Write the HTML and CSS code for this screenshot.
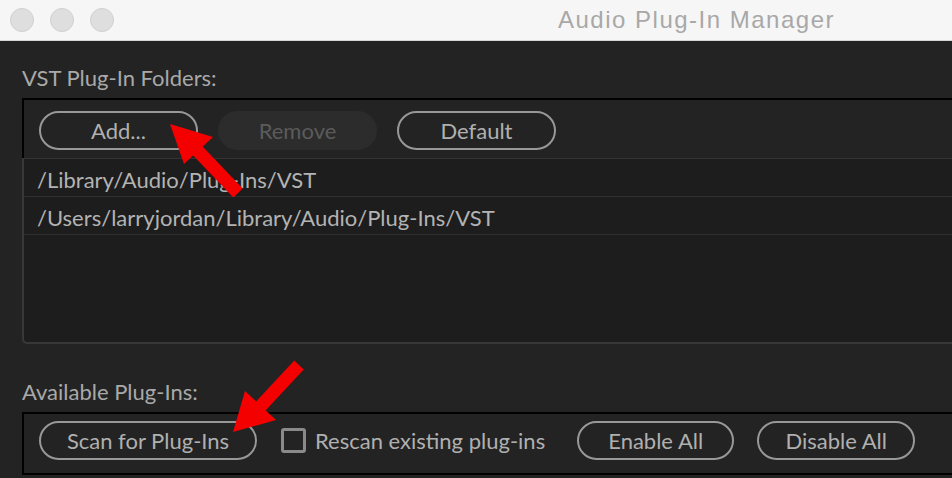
FILE: index.html
```html
<!DOCTYPE html>
<html>
<head>
<meta charset="utf-8">
<title>Audio Plug-In Manager</title>
<link rel="stylesheet" href="styles.css">
</head>
<body>
<div class="window">
  <header class="titlebar">
    <div class="lights">
      <span class="light"></span>
      <span class="light"></span>
      <span class="light"></span>
    </div>
    <div class="title">Audio Plug-In Manager</div>
  </header>
  <main class="content">
    <div class="label label-vst">VST Plug-In Folders:</div>
    <section class="vst">
      <div class="toolbar">
        <button class="btn">Add...</button>
        <button class="btn btn-disabled">Remove</button>
        <button class="btn">Default</button>
      </div>
      <ul class="list">
        <li class="row">/Library/Audio/Plug-Ins/VST</li>
        <li class="row">/Users/larryjordan/Library/Audio/Plug-Ins/VST</li>
      </ul>
    </section>
    <div class="label label-avail">Available Plug-Ins:</div>
    <section class="avail">
      <button class="btn btn-scan">Scan for Plug-Ins</button>
      <label class="check"><span class="box"></span><span class="check-text">Rescan existing plug-ins</span></label>
      <button class="btn btn-enable">Enable All</button>
      <button class="btn btn-disable">Disable All</button>
    </section>
  </main>
  <svg class="arrows" width="952" height="478" viewBox="0 0 952 478">
    <line x1="238" y1="193" x2="195" y2="148" stroke="#f40000" stroke-width="13"/>
    <polygon points="170,124 184,164 213,137" fill="#f40000"/>
    <line x1="299" y1="365" x2="258" y2="409" stroke="#f40000" stroke-width="13"/>
    <polygon points="233,432 245,391 276,420" fill="#f40000"/>
  </svg>
</div>
</body>
</html>
```
FILE: styles.css
```css
* { box-sizing: border-box; }
html, body {
  margin: 0;
  padding: 0;
  background: #232323;
  overflow: hidden;
}
.window {
  position: relative;
  width: 952px;
  height: 478px;
  background: #232323;
  font-family: Lato, "Noto Sans", sans-serif;
  overflow: hidden;
}
.titlebar {
  display: flex;
  align-items: center;
  height: 41px;
  background: #f6f6f6;
  border-bottom: 1px solid #d6d6d6;
  padding-left: 10px;
}
.lights {
  display: flex;
  gap: 16px;
}
.light {
  width: 24px;
  height: 24px;
  border-radius: 50%;
  background: #dedede;
  border: 1px solid #d0d0d0;
}
.title {
  margin-left: 444px;
  font-family: "Liberation Sans", Arial, sans-serif;
  font-size: 24px;
  letter-spacing: 1.5px;
  color: #a8a8a8;
  line-height: 40px;
  padding-bottom: 1px;
}
.content {
  padding-left: 22px;
}
.label {
  font-size: 22px;
  line-height: 25px;
  color: #a9a9a9;
}
.label-vst {
  margin-top: 24px;
  margin-bottom: 8px;
}
.label-avail {
  margin-top: 35px;
  margin-bottom: 8px;
}
.toolbar {
  display: flex;
  gap: 20px;
  border-top: 2px solid #000;
  border-left: 2px solid #000;
  padding: 11px 0 8px 15px;
}
.btn {
  width: 159px;
  height: 39px;
  border: 2px solid #989898;
  border-radius: 20px;
  background: transparent;
  color: #b0b0b0;
  font-family: Lato, "Noto Sans", sans-serif;
  font-size: 22px;
  line-height: 35px;
  padding: 0;
  text-align: center;
}
.btn-disabled {
  border-color: #2c2c2c;
  background: #2c2c2c;
  color: #5b5b5b;
}
.list {
  list-style: none;
  margin: 0;
  padding: 0;
  height: 186px;
  background: #1d1d1d;
  border-top: 1px solid #333;
  border-left: 2px solid #383838;
  border-bottom: 2px solid #383838;
  border-bottom-left-radius: 5px;
}
.row {
  height: 38px;
  line-height: 38px;
  padding: 2px 0 0 13px;
  border-bottom: 1px solid #2f2f2f;
  font-size: 22px;
  color: #b3b3b3;
}
.avail {
  display: flex;
  align-items: center;
  border-top: 2px solid #000;
  border-left: 2px solid #000;
  border-bottom: 2px solid #000;
  padding: 7px 0 13px 15px;
  height: 63px;
}
.btn-scan {
  width: 218px;
}
.check {
  display: flex;
  align-items: center;
  margin-left: 24px;
  color: #b0b0b0;
  font-size: 22px;
}
.box {
  width: 25px;
  height: 25px;
  border: 3px solid #8a8a8a;
  border-radius: 3px;
  margin-right: 9px;
}
.btn-enable {
  width: 157px;
  margin-left: 32px;
}
.btn-disable {
  width: 158px;
  margin-left: 23px;
}
.arrows {
  position: absolute;
  left: 0;
  top: 0;
  pointer-events: none;
}
```
